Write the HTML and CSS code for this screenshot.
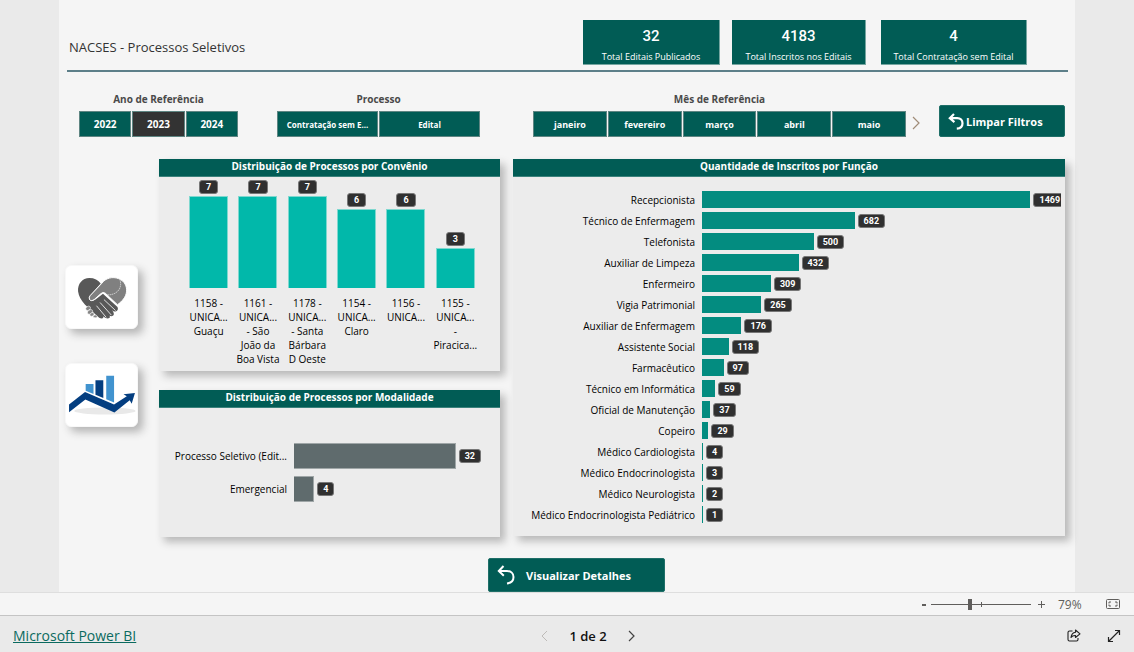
FILE: index.html
```html
<!DOCTYPE html>
<html lang="pt-BR">
<head>
<meta charset="utf-8">
<meta name="viewport" content="width=device-width, initial-scale=1">
<title>NACSES - Processos Seletivos</title>
<link rel="stylesheet" href="styles.css">
</head>
<body>
<main class="report">
  <header class="report-header">
    <h1>NACSES - Processos Seletivos</h1>
    <div class="cards">
      <div class="card card-a"><strong>32</strong><span>Total Editais Publicados</span></div>
      <div class="card card-b"><strong>4183</strong><span>Total Inscritos nos Editais</span></div>
      <div class="card card-c"><strong>4</strong><span>Total Contratação sem Edital</span></div>
    </div>
  </header>

  <section class="filters">
    <div class="slicer slicer-year" role="group" aria-labelledby="f-year">
      <h2 id="f-year">Ano de Referência</h2>
      <div class="options">
        <button type="button">2022</button>
        <button type="button" class="selected" aria-pressed="true">2023</button>
        <button type="button">2024</button>
      </div>
    </div>
    <div class="slicer slicer-process" role="group" aria-labelledby="f-process">
      <h2 id="f-process">Processo</h2>
      <div class="options">
        <button type="button">Contratação sem E...</button>
        <button type="button">Edital</button>
      </div>
    </div>
    <div class="slicer slicer-month" role="group" aria-labelledby="f-month">
      <h2 id="f-month">Mês de Referência</h2>
      <div class="options">
        <button type="button">janeiro</button>
        <button type="button">fevereiro</button>
        <button type="button">março</button>
        <button type="button">abril</button>
        <button type="button">maio</button>
      </div>
    </div>
    <button type="button" class="next-months" aria-label="Próximos meses">
      <svg width="8" height="14" viewBox="0 0 8 14"><path d="M1 1l6 6-6 6" fill="none" stroke="#a08c78" stroke-width="1.2"/></svg>
    </button>
    <button type="button" class="action clear">
      <svg width="16" height="17" viewBox="0 0 16 17"><path d="M6 1L1.800 5.200l4.600 4M2 5.200h7.200c3.400 0 5.300 2.200 5.300 5 0 3-2.200 5.200-5.700 5.400" fill="none" stroke="#fff" stroke-width="2.200"/></svg>
      <span>Limpar Filtros</span>
    </button>
  </section>

  <div class="content">
    <nav class="side" aria-label="Páginas">
      <button type="button" class="tile" aria-label="Convênios">
        <svg viewBox="45 45 217 192">
          <path d="M81 124C79 100 94 82 116 82C131 82 144 88 151 99L118 137Q111 147 119 152Q126 155 135 149L158 131L203 172Q207 181 199 185Q192 188 186 181Q195 192 190 198Q182 204 174 195L168 188Q184 201 178 206Q170 210 160 202L153 195Q163 203 157 207Q148 209 139 199L102 164Q84 145 81 124Z" fill="#585858"/>
          <path d="M118 137L154 99C166 82 188 77 206 84C225 91 233 108 231 125C229 141 218 154 203 165L165 129Q158 124 151 131L132 148Q121 156 117 149Q113 144 118 137Z" fill="#808080" stroke="#fff" stroke-width="3"/>
          <path d="M164 134Q194 137 207 119Q216 107 211 88" fill="none" stroke="#fff" stroke-width="2" stroke-dasharray="5 2"/>
          <path d="M161 149L197 183M149 158L184 197M138 168L168 204" fill="none" stroke="#fff" stroke-width="2.500"/>
          <g fill="#858585" stroke="#fff" stroke-width="1.500"><ellipse cx="112" cy="176" rx="8" ry="6" transform="rotate(-35 112 176)"/><ellipse cx="118" cy="187" rx="9" ry="6" transform="rotate(-35 118 187)"/><ellipse cx="124" cy="195" rx="7" ry="5" transform="rotate(-30 124 195)"/><ellipse cx="134" cy="201" rx="6" ry="4"/></g>
        </svg>
      </button>
      <button type="button" class="tile" aria-label="Indicadores">
        <svg viewBox="45 340 217 190">
          <ellipse cx="164" cy="484" rx="94" ry="11" fill="#e9e9e9"/>
          <path d="M105 401h24v31l-24-10z" fill="#4193cf"/>
          <path d="M135 390h24v54l-24-10z" fill="#043e80"/>
          <path d="M168 376h24v82l-24-10z" fill="#4193cf"/>
          <path d="M54 464L103 426L192 464L231 439L221 433L256 429L246 462L240 451L193 489L104 449L54 488Z" fill="#043e80"/>
        </svg>
      </button>
    </nav>

    <div class="left-column">
      <section class="panel convenio">
        <h2>Distribuição de Processos por Convênio</h2>
        <div class="columns">
          <div class="column"><div class="plot"><b class="badge">7</b><i class="bar" style="height:92px"></i></div><p>1158 -<br>UNICA...<br>Guaçu</p></div>
          <div class="column"><div class="plot"><b class="badge">7</b><i class="bar" style="height:92px"></i></div><p>1161 -<br>UNICA...<br>- São<br>João da<br>Boa Vista</p></div>
          <div class="column"><div class="plot"><b class="badge">7</b><i class="bar" style="height:92px"></i></div><p>1178 -<br>UNICA...<br>- Santa<br>Bárbara<br>D Oeste</p></div>
          <div class="column"><div class="plot"><b class="badge">6</b><i class="bar" style="height:79px"></i></div><p>1154 -<br>UNICA...<br>Claro</p></div>
          <div class="column"><div class="plot"><b class="badge">6</b><i class="bar" style="height:79px"></i></div><p>1156 -<br>UNICA...</p></div>
          <div class="column"><div class="plot"><b class="badge">3</b><i class="bar" style="height:40px"></i></div><p>1155 -<br>UNICA...<br>-<br>Piracica...</p></div>
        </div>
      </section>
      <section class="panel modalidade">
        <h2>Distribuição de Processos por Modalidade</h2>
        <ul class="rows">
          <li><span>Processo Seletivo (Edit...</span><div class="track"><i class="bar" style="width:78.5%"></i><b class="badge">32</b></div></li>
          <li><span>Emergencial</span><div class="track"><i class="bar" style="width:9.8%"></i><b class="badge">4</b></div></li>
        </ul>
      </section>
    </div>

    <section class="panel funcao">
      <h2>Quantidade de Inscritos por Função</h2>
      <ul class="rows">
        <li><span>Recepcionista</span><div class="track"><i class="bar" style="width:91.5%"></i><b class="badge">1469</b></div></li>
        <li><span>Técnico de Enfermagem</span><div class="track"><i class="bar" style="width:42.5%"></i><b class="badge">682</b></div></li>
        <li><span>Telefonista</span><div class="track"><i class="bar" style="width:31.1%"></i><b class="badge">500</b></div></li>
        <li><span>Auxiliar de Limpeza</span><div class="track"><i class="bar" style="width:26.9%"></i><b class="badge">432</b></div></li>
        <li><span>Enfermeiro</span><div class="track"><i class="bar" style="width:19.2%"></i><b class="badge">309</b></div></li>
        <li><span>Vigia Patrimonial</span><div class="track"><i class="bar" style="width:16.5%"></i><b class="badge">265</b></div></li>
        <li><span>Auxiliar de Enfermagem</span><div class="track"><i class="bar" style="width:11%"></i><b class="badge">176</b></div></li>
        <li><span>Assistente Social</span><div class="track"><i class="bar" style="width:7.4%"></i><b class="badge">118</b></div></li>
        <li><span>Farmacêutico</span><div class="track"><i class="bar" style="width:6%"></i><b class="badge">97</b></div></li>
        <li><span>Técnico em Informática</span><div class="track"><i class="bar" style="width:3.7%"></i><b class="badge">59</b></div></li>
        <li><span>Oficial de Manutenção</span><div class="track"><i class="bar" style="width:2.3%"></i><b class="badge">37</b></div></li>
        <li><span>Copeiro</span><div class="track"><i class="bar" style="width:1.8%"></i><b class="badge">29</b></div></li>
        <li><span>Médico Cardiologista</span><div class="track"><i class="bar" style="width:0.3%"></i><b class="badge">4</b></div></li>
        <li><span>Médico Endocrinologista</span><div class="track"><i class="bar" style="width:0.3%"></i><b class="badge">3</b></div></li>
        <li><span>Médico Neurologista</span><div class="track"><i class="bar" style="width:0.3%"></i><b class="badge">2</b></div></li>
        <li><span>Médico Endocrinologista Pediátrico</span><div class="track"><i class="bar" style="width:0.3%"></i><b class="badge">1</b></div></li>
      </ul>
    </section>
  </div>

  <button type="button" class="action details">
    <svg width="18" height="20" viewBox="0 0 18 20"><path d="M6.500 1L1.800 6l5 4.800M2 6h8c4 0 6.500 2.400 6.500 6 0 3.500-2.500 6-6.500 6.500" fill="none" stroke="#fff" stroke-width="2"/></svg>
    <span>Visualizar Detalhes</span>
  </button>
</main>

<div class="zoom-bar">
  <button type="button" aria-label="Reduzir zoom"><svg width="4" height="12" viewBox="0 0 4 12"><path d="M0 7h4" stroke="#605e5c" stroke-width="2"/></svg></button>
  <input type="range" min="0" max="100" value="39" aria-label="Zoom">
  <button type="button" aria-label="Ampliar zoom"><svg width="7" height="12" viewBox="0 0 7 12"><path d="M0 6.500h7M3.500 3v7" stroke="#605e5c"/></svg></button>
  <output>79%</output>
  <button type="button" class="fit" aria-label="Ajustar à página"><svg width="14" height="10" viewBox="0 0 14 10" fill="none" stroke="#605e5c"><rect x=".5" y=".5" width="13" height="9" rx="1"/><path d="M3 4.500V3h2M9 3h2v1.500M3 5.500V7h2M9 7h2V5.500"/></svg></button>
</div>

<footer class="footer">
  <a href="#">Microsoft Power BI</a>
  <div class="pager">
    <button type="button" disabled aria-label="Página anterior"><svg width="7" height="12" viewBox="0 0 7 12"><path d="M6 1L1 6l5 5" fill="none" stroke="#bebbb8"/></svg></button>
    <span>1 de 2</span>
    <button type="button" aria-label="Próxima página"><svg width="7" height="12" viewBox="0 0 7 12"><path d="M1 1l5 5-5 5" fill="none" stroke="#444" stroke-width="1.200"/></svg></button>
  </div>
  <div class="tools">
    <button type="button" aria-label="Compartilhar"><svg width="14" height="13" viewBox="0 0 14 13" fill="none" stroke="#222" stroke-width="1.100" stroke-linejoin="round"><path d="M5.500 2H2.500Q1 2 1 3.500v7Q1 12 2.500 12h7q1.500 0 1.500-1.500V9"/><path d="M8.500 1l4.500 3.800-4.500 3.700V6.500Q5.500 6.300 4 8.500 4.500 3.700 8.500 3.200z"/></svg></button>
    <button type="button" aria-label="Tela inteira"><svg width="14" height="14" viewBox="0 0 14 14" fill="none" stroke="#222" stroke-width="1.200"><path d="M1.500 12.500l11-11M8 1.500h4.500V6M1.500 8v4.500H6"/></svg></button>
  </div>
</footer>
</body>
</html>
```
FILE: styles.css
```css
* { box-sizing: border-box; }

body {
  margin: 0;
  min-height: 100vh;
  display: flex;
  flex-direction: column;
  background: #eaeaea;
  color: #252423;
  font-family: "Open Sans", "Noto Sans", sans-serif;
  font-size: 11px;
}

h1, h2, p, ul { margin: 0; padding: 0; }
ul { list-style: none; }
svg { display: block; }
button { font-family: inherit; padding: 0; border: 0; background: none; cursor: pointer; }

.report {
  flex: 1;
  display: flex;
  flex-direction: column;
  margin: 0 59px;
  background: #f5f5f5;
}

/* Header */
.report-header {
  display: flex;
  justify-content: space-between;
  margin: 0 7px 0 8px;
  padding: 20px 41px 5px 2px;
  border-bottom: 2px solid #5d7f89;
}
.report-header h1 {
  padding-top: 17px;
  color: #333;
  font-size: 13px;
  line-height: 20px;
  font-weight: 400;
}
.cards { display: flex; }
.card {
  height: 45px;
  padding-top: 6px;
  border-right: 1px solid #75a5a0;
  border-bottom: 1px solid #75a5a0;
  background: #015c55;
  color: #fff;
  text-align: center;
}
.card-a { width: 137px; margin-right: 12px; }
.card-b { width: 134px; margin-right: 15px; }
.card-c { width: 146px; }
.card strong, .card span { display: block; white-space: nowrap; }
.card strong { font: 500 15px/20px Roboto, sans-serif; }
.card span { font-size: 9px; line-height: 21px; }

/* Filters */
.filters {
  display: flex;
  align-items: flex-start;
  padding: 18px 10px 0 20px;
}
.slicer h2 {
  height: 21px;
  color: #4a4a4a;
  font-size: 10px;
  line-height: 18px;
  font-weight: 700;
  text-align: center;
}
.slicer .options { display: flex; gap: 1px; }
.slicer button {
  flex: 1 1 0;
  height: 26px;
  border: 1px solid #5e8582;
  background: #015c55;
  color: #fff;
  font-size: 10px;
  font-weight: 700;
  white-space: nowrap;
}
.slicer button.selected { background: #333; }
.slicer-year { flex: 0 0 159px; margin-right: 39px; }
.slicer-process { flex: 0 0 203px; margin-right: 53px; }
.slicer-process button { font-size: 8px; }
.slicer-month { flex: 1 0 373px; }
.slicer-month button { font-size: 9px; }
.next-months { margin: 26px 19px 0 6px; }
.action {
  display: flex;
  align-items: center;
  border: 1px solid #1f6f68;
  border-radius: 2px;
  background: #015c55;
  color: #fff;
  font-size: 11px;
  font-weight: 700;
}
.clear {
  width: 126px;
  height: 32px;
  margin-top: 15px;
  padding-left: 8px;
  gap: 2px;
}

/* Panels */
.content {
  display: grid;
  grid-template-columns: 73px 375fr 552fr;
  padding: 22px 10px 0 6px;
}
.side {
  display: flex;
  flex-direction: column;
  gap: 34px;
  padding-top: 106px;
}
.tile {
  width: 73px;
  height: 64px;
  border: 1px solid #f8f8f8;
  border-radius: 6px;
  background: #fff;
  box-shadow: 5px 5px 9px #b5b5b5;
}
.tile svg { width: 100%; height: 100%; }
.left-column {
  display: flex;
  flex-direction: column;
  gap: 19px;
  margin: 0 13px 0 21px;
}
.panel {
  background: #ececec;
  box-shadow: 5px 5px 8px #b8b8b8;
}
.panel h2 {
  height: 18px;
  border-bottom: 1px solid #3b827c;
  background: #015c55;
  color: #fff;
  font-size: 10px;
  line-height: 14px;
  font-weight: 700;
  text-align: center;
}
.convenio { height: 212px; }
.modalidade { height: 147px; }
.funcao { height: 377px; }

.badge {
  flex: none;
  height: 14px;
  padding: 0 5px;
  border: 1px solid #777;
  border-radius: 3px;
  background: #303030;
  color: #fff;
  font: 700 9px/12px Roboto, sans-serif;
}
.bar { display: block; flex: none; }

.columns {
  display: grid;
  grid-template-columns: repeat(6, 1fr);
  padding: 0 20px 0 25px;
}
.plot {
  display: flex;
  flex-direction: column;
  align-items: center;
  justify-content: flex-end;
  gap: 2px;
  height: 111px;
}
.plot .badge { padding: 0 6px; }
.plot .bar { width: 39px; border: 1px solid #7fd8cf; border-bottom: 0; background: #01b8aa; }
.column p {
  padding-top: 8px;
  color: #000;
  font-size: 10px;
  line-height: 14px;
  text-align: center;
  white-space: nowrap;
}

.rows li { display: flex; align-items: center; }
.rows span {
  flex: none;
  margin-right: 7px;
  color: #000;
  font-size: 10px;
  text-align: right;
  white-space: nowrap;
}
.track {
  flex: 1;
  min-width: 0;
  display: flex;
  align-items: center;
  gap: 3px;
  overflow: hidden;
}
.funcao .rows { padding: 12px 4px 0 0; }
.funcao li { height: 21px; }
.funcao span { width: 182px; }
.funcao .bar { height: 17px; background: #038c80; }
.modalidade .rows { padding-top: 31px; }
.modalidade li { height: 33px; }
.modalidade span { width: 128px; }
.modalidade .bar { height: 26px; border: 1px solid #9fa6a7; border-left: 0; background: #5f6b6d; }

.details {
  align-self: flex-start;
  width: 177px;
  height: 34px;
  margin: 21px 0 0 429px;
  padding-left: 8px;
  gap: 11px;
}

/* Zoom bar */
.zoom-bar {
  display: flex;
  align-items: center;
  justify-content: flex-end;
  height: 24px;
  padding-right: 14px;
  border-top: 1px solid #dedede;
  border-bottom: 1px solid #c4c4c4;
  background: #f5f5f5;
}
.zoom-bar input {
  appearance: none;
  width: 100px;
  height: 12px;
  margin: 0 7px 0 5px;
  background:
    linear-gradient(#605e5c, #605e5c) 50% 50% / 1px 5px no-repeat,
    linear-gradient(#605e5c, #605e5c) 50% 50% / 100% 1px no-repeat;
}
.zoom-bar input::-webkit-slider-thumb {
  appearance: none;
  width: 4px;
  height: 11px;
  background: #605e5c;
}
.zoom-bar output { width: 37px; margin-left: 13px; color: #605e5c; font-size: 12px; }
.zoom-bar .fit { margin-left: 11px; }

/* Footer */
.footer {
  display: grid;
  grid-template-columns: 1fr auto 1fr;
  align-items: center;
  height: 36px;
  padding: 3px 13px 0 13px;
  font-size: 14px;
}
.footer a { color: #0b6a5f; justify-self: start; }
.pager { display: flex; align-items: center; gap: 21px; margin-left: 42px; color: #111; font-size: 13px; font-weight: 600; }
.tools { display: flex; justify-content: flex-end; gap: 26px; }
```
